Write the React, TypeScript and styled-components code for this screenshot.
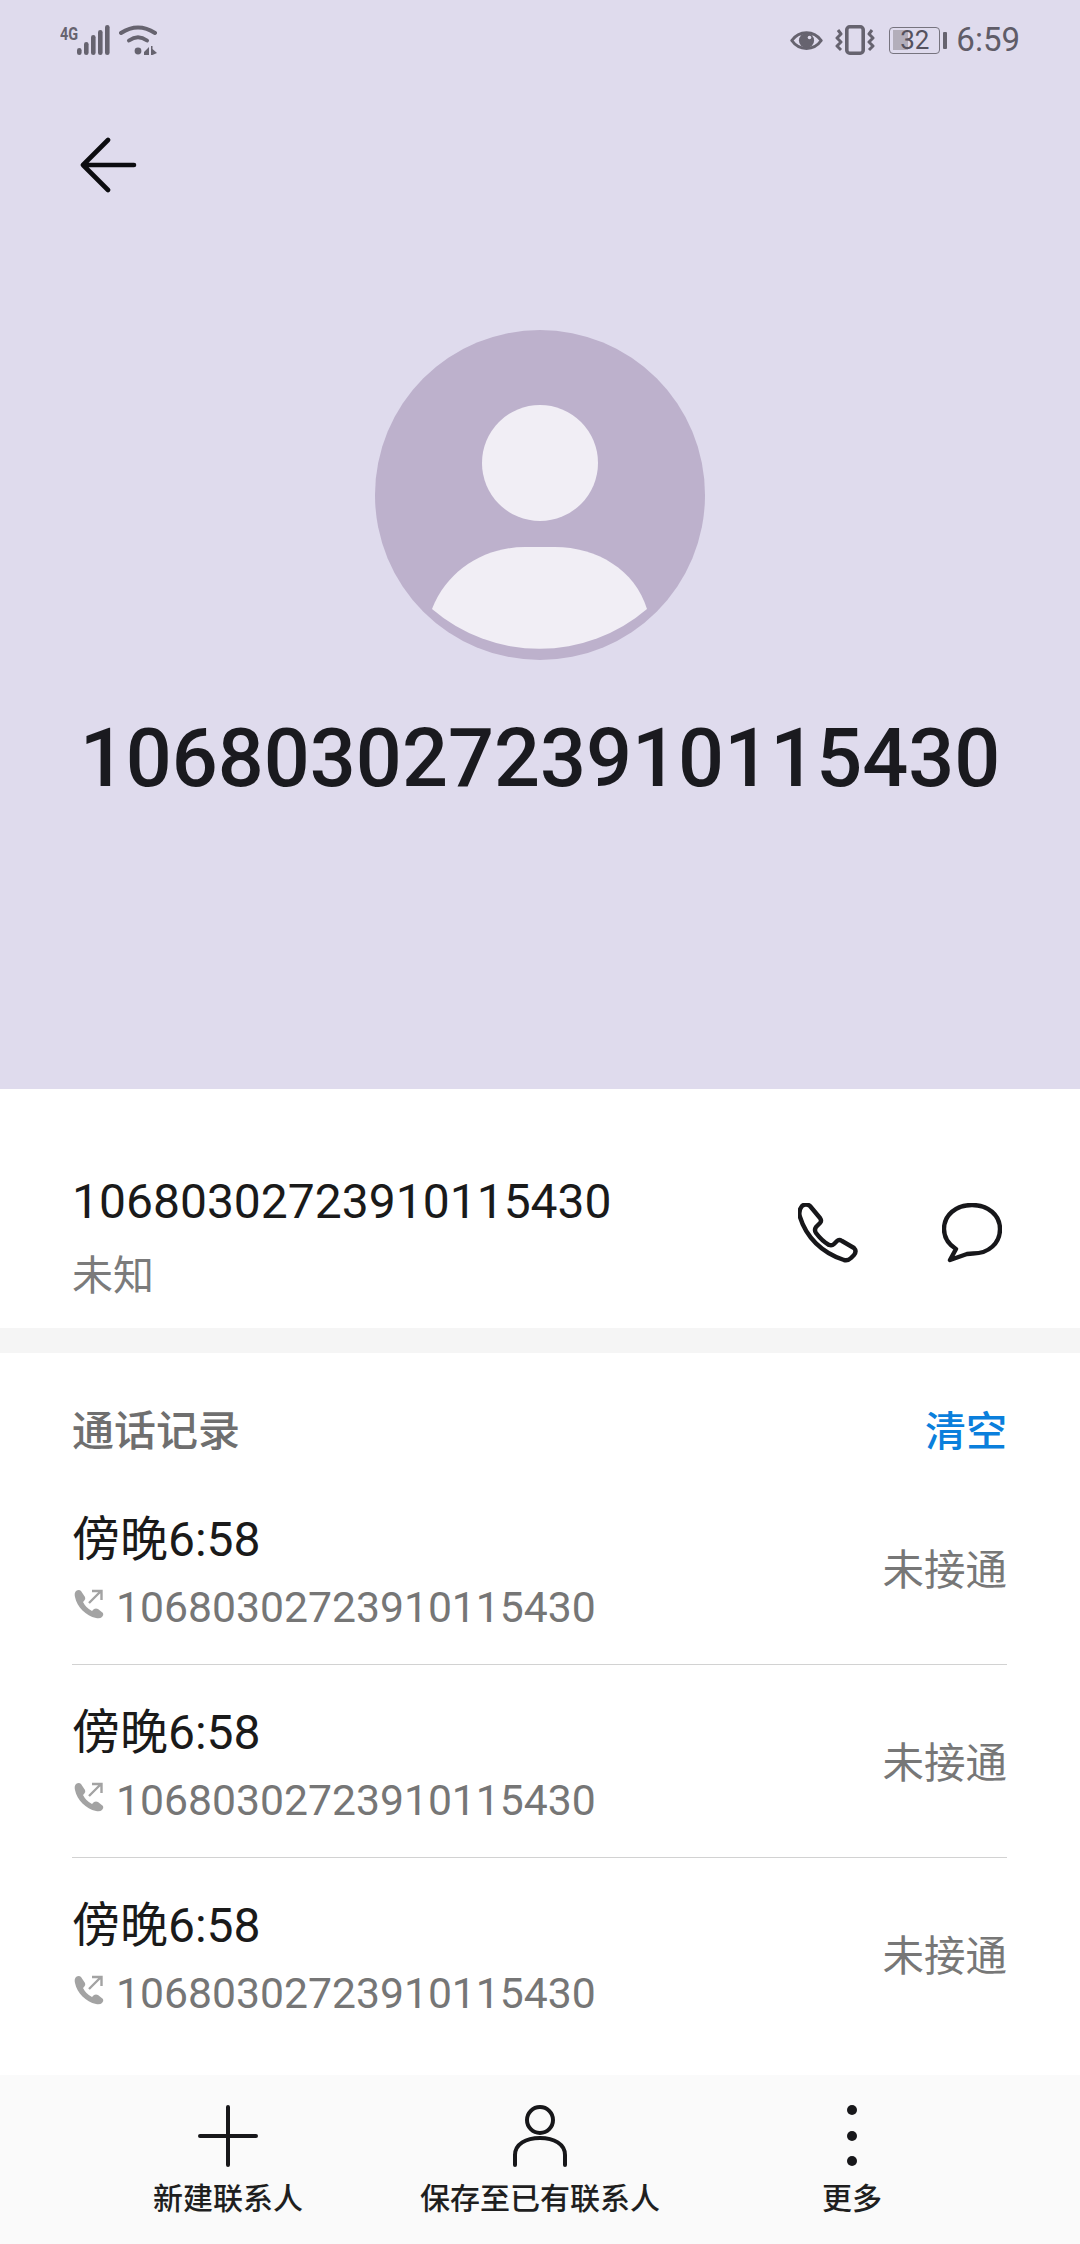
import React from "react";
import styled, { createGlobalStyle } from "styled-components";

const calls = [1, 2, 3];
const number = "10680302723910115430";

const GlobalStyle = createGlobalStyle`
  html, body {
    margin: 0;
    padding: 0;
    background: #fff;
  }
  body {
    font-family: Roboto, "Noto Sans CJK SC", sans-serif;
  }
`;

export default function App() {
  return (
    <Page>
      <GlobalStyle />
      <Hero>
        <StatusBar>
          <StatusGroup>
            <NetworkLabel>4G</NetworkLabel>
            <svg width="33" height="30" viewBox="0 0 33 30">
              <g fill="#66636f">
                <rect x="0" y="23" width="4.6" height="7" rx="2.3" />
                <rect x="7" y="17" width="4.6" height="13" rx="2.3" />
                <rect x="14" y="10" width="4.6" height="20" rx="2.3" />
                <rect x="21" y="5" width="4.6" height="25" rx="2.3" />
                <rect x="28" y="0" width="4.6" height="30" rx="2.3" />
              </g>
            </svg>
            <WifiIcon width="38" height="30" viewBox="0 0 38 30">
              <g fill="none" stroke="#66636f" strokeWidth="4" strokeLinecap="round">
                <path d="M2 8 Q19 -3 36 8" />
                <path d="M10 15.5 Q19 9 28 15.5" />
              </g>
              <circle cx="19" cy="26" r="3.4" fill="#66636f" />
              <path d="M25 27 L30 22 V30 H25 Z M32 21 H33.5 V24 L38 28 L33.5 30 H32 Z" fill="#66636f" />
            </WifiIcon>
          </StatusGroup>
          <StatusGroup>
            <svg width="33" height="25" viewBox="0 0 33 25">
              <path d="M1.8 12.5 C9 2 24 2 31.2 12.5 C24 23 9 23 1.8 12.5 Z" fill="none" stroke="#66636f" strokeWidth="3" strokeLinejoin="round" />
              <circle cx="16.5" cy="12.5" r="7.6" fill="#66636f" />
              <circle cx="19.5" cy="9.5" r="1.8" fill="#dfdbed" />
            </svg>
            <VibrateIcon width="40" height="30" viewBox="0 0 40 30">
              <rect x="11.8" y="1.8" width="16.4" height="26.4" rx="3" fill="none" stroke="#66636f" strokeWidth="3.6" />
              <path d="M3 5 L6 9 L2 13 L6 17 L2 21 L6 25" fill="none" stroke="#66636f" strokeWidth="3" strokeLinejoin="round" />
              <path d="M37 5 L34 9 L38 13 L34 17 L38 21 L34 25" fill="none" stroke="#66636f" strokeWidth="3" strokeLinejoin="round" />
            </VibrateIcon>
            <Battery>
              <BatteryShell>
                <BatteryFill />
                <BatteryLevel>32</BatteryLevel>
              </BatteryShell>
              <BatteryCap />
            </Battery>
            <Clock>6:59</Clock>
          </StatusGroup>
        </StatusBar>
        <BackButton>
          <svg width="60" height="56" viewBox="0 0 60 56">
            <path d="M31 3 L6 28 L31 53 M6 28 H57" fill="none" stroke="#0c0c10" strokeWidth="4.6" strokeLinecap="round" strokeLinejoin="round" />
          </svg>
        </BackButton>
        <Avatar>
          <svg width="330" height="330" viewBox="0 0 330 330">
            <circle cx="165" cy="165" r="165" fill="#bdb1cc" />
            <circle cx="165" cy="133" r="58" fill="#f1eef5" />
            <path d="M57 279 C72 240 110 217 150 217 H180 C222 217 260 240 272 279 A165 165 0 0 1 57 279 Z" fill="#f1eef5" />
          </svg>
        </Avatar>
        <HeroTitle>{number}</HeroTitle>
      </Hero>

      <InfoRow>
        <div>
          <InfoNumber>{number}</InfoNumber>
          <InfoLabel>未知</InfoLabel>
        </div>
        <Actions>
          <svg width="60" height="60" viewBox="0 0 60 60">
            <path d="M4 3 Q8 0 12 3 L22 15 Q24 18 22 20 L18 24 Q16 27 18 30 Q24 38 31 42 Q34 43 36 41 L39 38 Q41 36 44 38 L56 45 Q59 48 56 52 L53 55 Q50 58 46 57 C24 50 8 34 2 14 Q0 8 4 3 Z" fill="none" stroke="#17171a" strokeWidth="4.4" strokeLinejoin="round" />
          </svg>
          <svg width="60" height="60" viewBox="0 0 60 60">
            <path d="M25 51 Q28 50.5 31 50.5 C47 50.5 58 40 58 26 C58 12 46 2 30 2 C14 2 2 12 2 26 C2 34 6 41 14 46 L8 57 Z" fill="none" stroke="#17171a" strokeWidth="4.4" strokeLinejoin="round" />
          </svg>
        </Actions>
      </InfoRow>
      <Divider />

      <CallSection>
        <SectionHeader>
          <SectionTitle>通话记录</SectionTitle>
          <ClearButton>清空</ClearButton>
        </SectionHeader>
        {calls.map((id) => (
          <CallRow key={id} $last={id === calls.length}>
            <CallText>
              <CallTime>傍晚6:58</CallTime>
              <CallNumber>
                <svg width="30" height="30" viewBox="0 0 30 30">
                  <path d="M2 2 Q5 0 7 2 L11 8 Q12 10 10 12 L9 13 Q12 19 18 22 L20 20 Q22 19 24 20 L29 24 Q30 26 28 28 Q26 30 22 29 C12 27 3 18 1 8 Q0 4 2 2 Z" fill="#a3a3a3" />
                  <path d="M15 14 L27 2 M18 2 H27.5 V11" fill="none" stroke="#a3a3a3" strokeWidth="2.4" />
                </svg>
                {number}
              </CallNumber>
            </CallText>
            <CallStatus>未接通</CallStatus>
          </CallRow>
        ))}
      </CallSection>

      <BottomBar>
        <BottomAction>
          <svg width="60" height="62" viewBox="0 0 60 62">
            <path d="M30 2 V60 M2 31 H58" fill="none" stroke="#17171a" strokeWidth="4" strokeLinecap="round" />
          </svg>
          <BottomLabel>新建联系人</BottomLabel>
        </BottomAction>
        <BottomAction>
          <svg width="56" height="62" viewBox="0 0 56 62">
            <circle cx="28" cy="15" r="13" fill="none" stroke="#17171a" strokeWidth="4" />
            <path d="M3 60 V50 C3 39 14 33 28 33 C42 33 53 39 53 50 V60" fill="none" stroke="#17171a" strokeWidth="4" strokeLinecap="round" />
          </svg>
          <BottomLabel>保存至已有联系人</BottomLabel>
        </BottomAction>
        <BottomAction>
          <svg width="14" height="62" viewBox="0 0 14 62">
            <circle cx="7" cy="5" r="5" fill="#17171a" />
            <circle cx="7" cy="31" r="5" fill="#17171a" />
            <circle cx="7" cy="56" r="5" fill="#17171a" />
          </svg>
          <BottomLabel>更多</BottomLabel>
        </BottomAction>
      </BottomBar>
    </Page>
  );
}

const Page = styled.div`
  width: 1080px;
  height: 2244px;
  display: flex;
  flex-direction: column;
  overflow: hidden;
  background: #fff;
`;

const Hero = styled.header`
  height: 1089px;
  flex: none;
  display: flex;
  flex-direction: column;
  background: #dfdbed;
`;

const StatusBar = styled.div`
  height: 80px;
  display: flex;
  justify-content: space-between;
  align-items: center;
  padding: 0 60px;
`;

const StatusGroup = styled.div`
  display: flex;
  align-items: center;
`;

const NetworkLabel = styled.span`
  align-self: flex-start;
  width: 17px;
  margin-top: -1px;
  font-size: 19px;
  line-height: 20px;
  font-weight: 700;
  color: #66636f;
  transform: scaleX(0.76);
  transform-origin: left center;
`;

const WifiIcon = styled.svg`
  margin-left: 9px;
`;

const VibrateIcon = styled.svg`
  margin-left: 12px;
`;

const Battery = styled.div`
  display: flex;
  align-items: center;
  margin-left: 14px;
`;

const BatteryShell = styled.div`
  position: relative;
  width: 51px;
  height: 27px;
  box-sizing: border-box;
  display: flex;
  align-items: center;
  justify-content: center;
  border: 1.5px solid #77747f;
  border-radius: 4px;
`;

const BatteryFill = styled.span`
  position: absolute;
  left: 2.5px;
  top: 2.5px;
  bottom: 2.5px;
  width: 15px;
  background: #b3aeba;
`;

const BatteryLevel = styled.span`
  position: relative;
  font-size: 26px;
  line-height: 24px;
  color: #55525e;
`;

const BatteryCap = styled.span`
  width: 4px;
  height: 17px;
  margin-left: 3px;
  border-radius: 1px;
  background: #66636f;
`;

const Clock = styled.span`
  margin-left: 9px;
  font-size: 33px;
  line-height: 40px;
  color: #5f5c68;
`;

const BackButton = styled.div`
  display: flex;
  height: 56px;
  margin-top: 57px;
  padding-left: 77px;
`;

const Avatar = styled.div`
  display: flex;
  justify-content: center;
  margin-top: 137px;
`;

const HeroTitle = styled.h1`
  margin: 49px 0 0;
  font-size: 81px;
  line-height: 100px;
  font-weight: 500;
  text-align: center;
  color: #1a1a1f;
`;

const InfoRow = styled.section`
  height: 239px;
  flex: none;
  box-sizing: border-box;
  display: flex;
  justify-content: space-between;
  align-items: flex-start;
  padding: 78px 78px 0 72px;
`;

const InfoNumber = styled.div`
  font-size: 48px;
  line-height: 70px;
  color: #1a1a1a;
`;

const InfoLabel = styled.div`
  margin-top: 4px;
  font-size: 41px;
  line-height: 70px;
  color: #7b7b7b;
`;

const Actions = styled.div`
  display: flex;
  gap: 84px;
  margin-top: 36px;
`;

const Divider = styled.div`
  height: 25px;
  flex: none;
  background: #f5f5f5;
`;

const CallSection = styled.section`
  flex: 1;
  padding: 0 73px 0 72px;
`;

const SectionHeader = styled.div`
  height: 119px;
  box-sizing: border-box;
  display: flex;
  justify-content: space-between;
  padding-top: 49px;
`;

const SectionTitle = styled.span`
  font-size: 42px;
  line-height: 60px;
  font-weight: 500;
  color: #6f6f6f;
`;

const ClearButton = styled.span`
  font-size: 41px;
  line-height: 60px;
  font-weight: 500;
  color: #0a7fdc;
`;

const CallRow = styled.div<{ $last: boolean }>`
  height: 193px;
  box-sizing: border-box;
  display: flex;
  justify-content: space-between;
  align-items: center;
  padding-top: 6px;
  border-bottom: 1.5px solid ${(props) => (props.$last ? "transparent" : "#d2d2d2")};
`;

const CallText = styled.div`
  padding-top: 4px;
`;

const CallTime = styled.div`
  font-size: 48px;
  line-height: 66px;
  color: #1a1a1a;
`;

const CallNumber = styled.div`
  display: flex;
  align-items: center;
  gap: 12px;
  margin-top: 1px;
  font-size: 42.7px;
  line-height: 66px;
  color: #767676;

  svg {
    margin: -6px 0 0 2px;
  }
`;

const CallStatus = styled.span`
  font-size: 41.5px;
  line-height: 60px;
  color: #777;
`;

const BottomBar = styled.nav`
  height: 169px;
  flex: none;
  box-sizing: border-box;
  display: grid;
  grid-template-columns: repeat(3, 1fr);
  padding: 30px 72px 0;
  background: #fafafa;
`;

const BottomAction = styled.div`
  display: flex;
  flex-direction: column;
  align-items: center;
`;

const BottomLabel = styled.span`
  margin-top: 11px;
  font-size: 30px;
  line-height: 42px;
  font-weight: 500;
  white-space: nowrap;
  color: #1f1f1f;
`;
